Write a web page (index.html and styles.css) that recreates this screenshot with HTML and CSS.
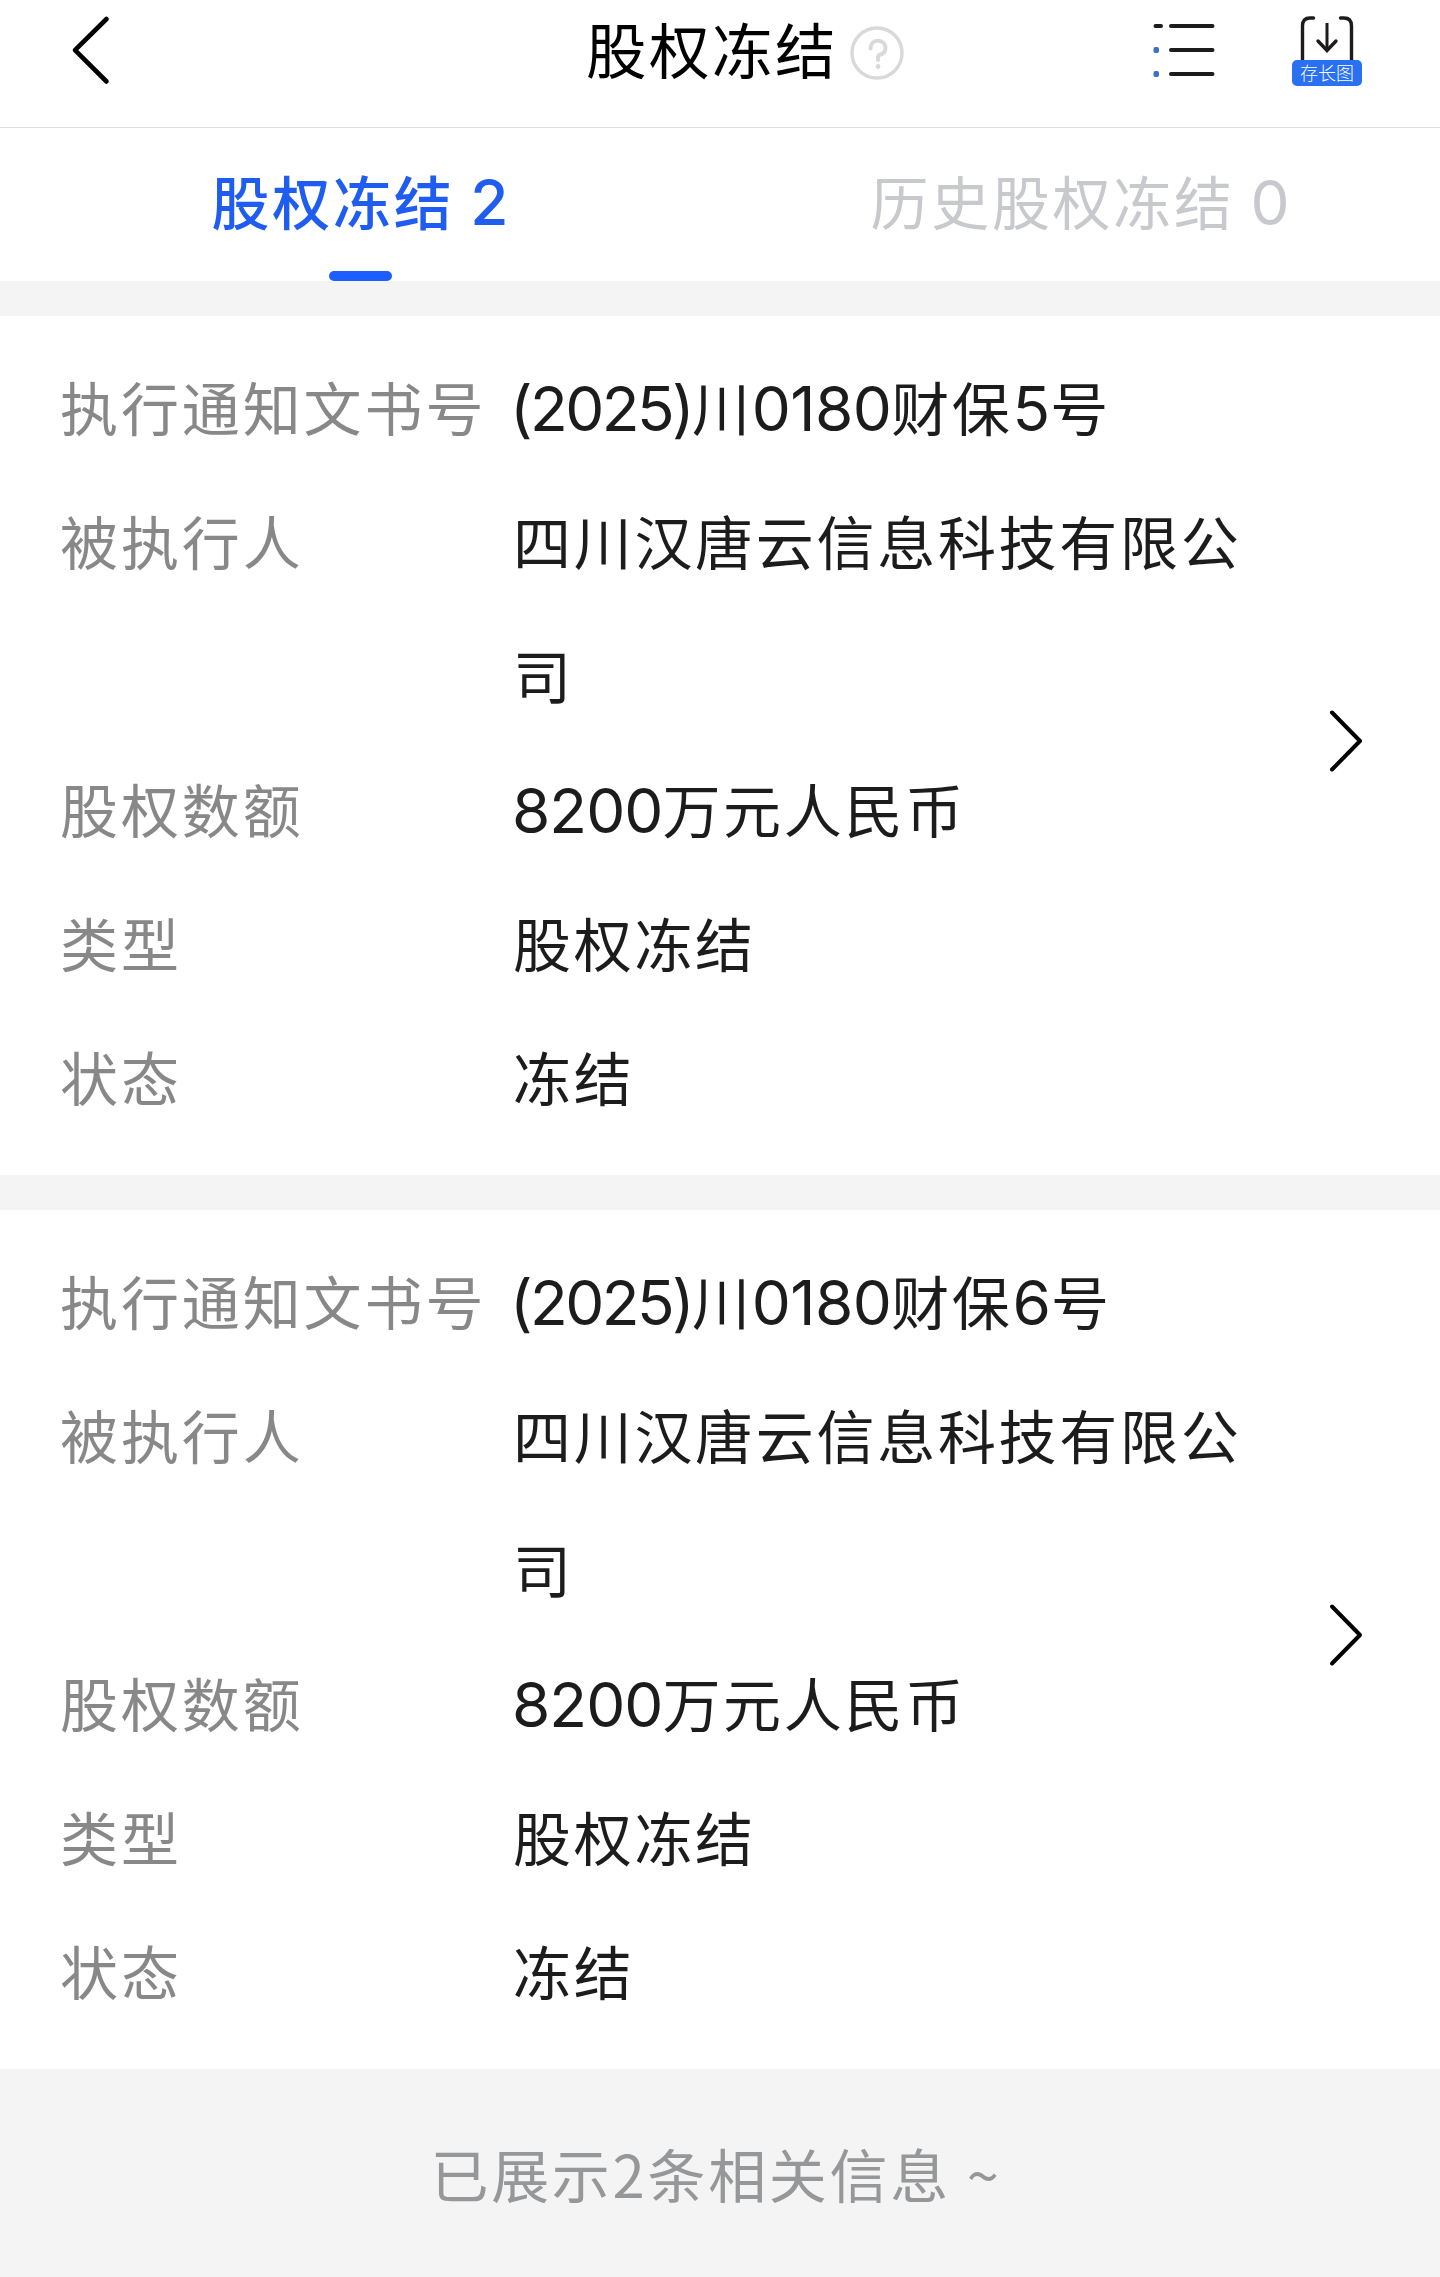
FILE: index.html
```html
<!DOCTYPE html>
<html lang="zh-CN">
<head>
    <meta charset="UTF-8">
    <meta name="viewport" content="width=device-width, initial-scale=1.0">
    <title>股权冻结</title>
    <link rel="stylesheet" href="styles.css">
</head>
<body>
    <!-- Top bar -->
    <header class="navbar">
        <svg class="back" width="40" height="72" viewBox="0 0 40 72">
            <path d="M36.500 5 L5 36.200 L36.500 67.500" fill="none" stroke="#000" stroke-width="4.600" stroke-linecap="round" stroke-linejoin="round"/>
        </svg>
        <h1 class="title">股权冻结</h1>
        <svg class="help" width="54" height="54" viewBox="0 0 54 54" fill="none" stroke="#d9d9d9">
            <circle cx="27" cy="27" r="25" stroke-width="3.400"/>
            <path d="M20.500 22.500 C20.500 17.500 23.500 14.800 28 14.800 C32.500 14.800 35.500 18 35.500 21.500 C35.500 26 33 28 30 28.700 C28.600 29.200 28 30 28 31.500 V34" stroke-width="4" stroke-linecap="round"/>
            <circle cx="28" cy="40.500" r="2.400" fill="#d9d9d9" stroke="none"/>
        </svg>
        <div class="actions">
            <svg class="list-icon" width="64" height="56" viewBox="0 0 64 56" stroke-linecap="round" stroke-width="4">
                <path d="M3.500 4 H9 M19 4 H60.500 M19 28 H60.500 M19 52 H60.500" stroke="#1c1c1c"/>
                <rect x="1.500" y="25" width="5.500" height="6" rx="2" fill="#3a71cc"/>
                <rect x="1.500" y="49" width="5.500" height="6" rx="2" fill="#3a71cc"/>
            </svg>
            <div class="save">
                <svg class="save-icon" width="54" height="46" viewBox="0 0 54 46" fill="none" stroke="#1c1c1c" stroke-linecap="round">
                    <path d="M13.500 4 H10 Q2.500 4 2.500 12 V46 M40.500 4 H44 Q51.500 4 51.500 12 V46" stroke-width="3.400"/>
                    <path d="M27 9 V36" stroke-width="3" stroke-linecap="butt"/>
                    <path d="M18 27 L27 36.500 L36 27" stroke-width="3.400"/>
                </svg>
                <span class="save-label">存长图</span>
            </div>
        </div>
    </header>

    <nav class="tabs">
        <a class="tab active"><span>股权冻结 <span class="num">2</span></span></a>
        <a class="tab"><span>历史股权冻结 <span class="num">0</span></span></a>
    </nav>

    <!-- Freeze records -->
    <main class="list">
        <section class="card">
            <dl class="info">
                <dt>执行通知文书号</dt>
                <dd><span class="num year">(2025)</span>川<span class="num code">0180</span>财保<span class="num">5</span>号</dd>
                <dt>被执行人</dt>
                <dd>四川汉唐云信息科技有限公司</dd>
                <dt>股权数额</dt>
                <dd><span class="num amount">8200</span>万元人民币</dd>
                <dt>类型</dt>
                <dd>股权冻结</dd>
                <dt>状态</dt>
                <dd>冻结</dd>
            </dl>
            <svg class="arrow" width="36" height="66" viewBox="0 0 36 66">
                <path d="M4 4.500 L32 33 L4 61.500" fill="none" stroke="#000" stroke-width="4" stroke-linecap="round" stroke-linejoin="round"/>
            </svg>
        </section>

        <section class="card">
            <dl class="info">
                <dt>执行通知文书号</dt>
                <dd><span class="num year">(2025)</span>川<span class="num code">0180</span>财保<span class="num">6</span>号</dd>
                <dt>被执行人</dt>
                <dd>四川汉唐云信息科技有限公司</dd>
                <dt>股权数额</dt>
                <dd><span class="num amount">8200</span>万元人民币</dd>
                <dt>类型</dt>
                <dd>股权冻结</dd>
                <dt>状态</dt>
                <dd>冻结</dd>
            </dl>
            <svg class="arrow" width="36" height="66" viewBox="0 0 36 66">
                <path d="M4 4.500 L32 33 L4 61.500" fill="none" stroke="#000" stroke-width="4" stroke-linecap="round" stroke-linejoin="round"/>
            </svg>
        </section>
    </main>

    <footer class="footer">已展示2条相关信息 ~</footer>
</body>
</html>
```
FILE: styles.css
```css
* {
    box-sizing: border-box;
}

body {
    margin: 0;
    background-color: #f4f4f4;
    color: #1c1c1c;
    font-family: "Noto Sans CJK SC", sans-serif;
    font-size: 58px;
    letter-spacing: 2.7px;
}

/* Top bar */
.navbar {
    display: flex;
    align-items: flex-start;
    height: 128px;
    padding: 14px 78px 0 70px;
    background-color: #fff;
    border-bottom: 1px solid #dedede;
}

.title {
    margin: -10px 0 0 476px;
    color: #000;
    font-size: 60.5px;
    font-weight: 400;
    line-height: 88px;
    letter-spacing: 2.5px;
}

.help {
    margin: 12px 0 0 12px;
}

.actions {
    display: flex;
    align-items: flex-start;
    gap: 76px;
    margin-left: auto;
}

.list-icon {
    margin-top: 8px;
}

.save {
    display: flex;
    flex-direction: column;
    align-items: center;
    width: 70px;
}

.save-label {
    width: 70px;
    height: 26px;
    border-radius: 5px;
    background-color: #2970f3;
    color: #fff;
    font-size: 18px;
    font-weight: 300;
    line-height: 25px;
    letter-spacing: 0;
    text-align: center;
}

/* Tabs */
.tabs {
    display: flex;
    height: 153px;
    background-color: #fff;
}

.tab {
    display: flex;
    flex: 1;
    flex-direction: column;
    align-items: center;
    padding-top: 2px;
    color: #c8c9cc;
    line-height: 141px;
}

.tab.active {
    color: #1f5cf0;
    font-weight: 500;
}

.tab.active::after {
    content: "";
    width: 63px;
    height: 10px;
    border-radius: 5px;
    background-color: #1e5eff;
}

/* Cards */
.list {
    display: flex;
    flex-direction: column;
    gap: 35px;
    padding-top: 35px;
}

.card {
    display: flex;
    align-items: center;
    justify-content: space-between;
    height: 859px;
    padding: 23px 76px 32px 60px;
    background-color: #fff;
}

.info {
    display: grid;
    grid-template-columns: 453px 740px;
    margin: 0;
    line-height: 134px;
}

.info dt {
    color: #888;
    letter-spacing: 2.9px;
}

.info dd {
    margin: 0;
}

/* Digits use a rounder Latin face */
.num {
    font-family: Inter, sans-serif;
    font-size: 62px;
    line-height: 1;
    letter-spacing: 0;
}

.num.year {
    margin-left: -3px;
    letter-spacing: -2.6px;
}

.num.code {
    margin-left: -1px;
    letter-spacing: -0.6px;
}

.num.amount {
    margin-left: -1px;
    letter-spacing: -1px;
}

.footer {
    height: 208px;
    padding-right: 8px;
    color: #969799;
    line-height: 209px;
    text-align: center;
}
```
